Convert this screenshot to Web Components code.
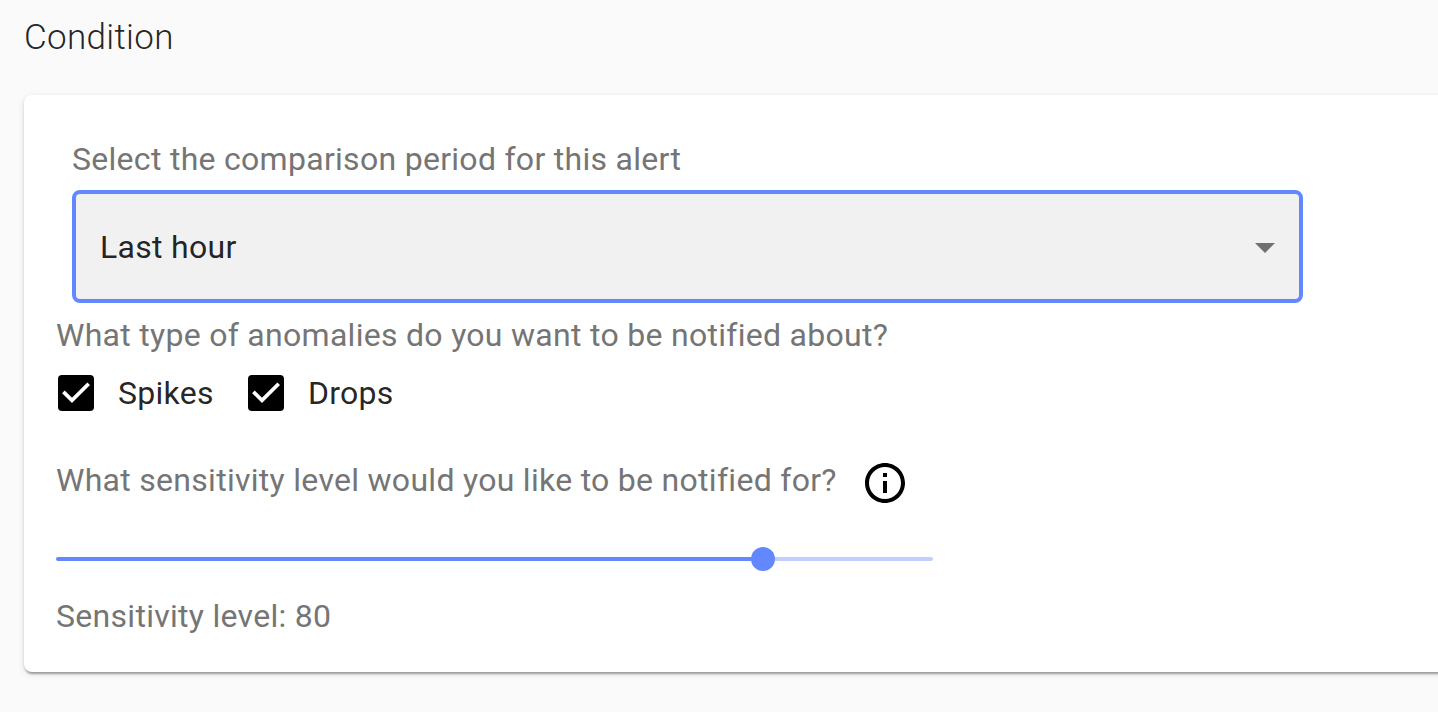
<!DOCTYPE html>
<html lang="en"><head><meta charset="utf-8"><title>Condition</title>
<style>body{margin:0;background:#fafafa;font-family:Roboto,sans-serif;overflow:hidden}</style></head><body>
<alert-page></alert-page>
<script>
const define=(name,html)=>customElements.define(name,class extends HTMLElement{
  constructor(){super();this.attachShadow({mode:'open'}).innerHTML=html;}
});
define('page-title',`<style>:host{display:block;font-size:35px;line-height:48px;font-weight:300;letter-spacing:.32px;color:rgba(0,0,0,.87)}</style><slot></slot>`);
define('field-label',`<style>:host{display:block;font-size:32px;line-height:40px;letter-spacing:.288px;color:#757575;white-space:nowrap}</style><slot></slot>`);
define('select-box',`<style>:host{display:flex;box-sizing:border-box;width:1231px;height:113px;border:4px solid #6387ff;border-radius:8px;background:#f1f1f1;align-items:center;justify-content:space-between;padding:0 24px;font-size:32px;letter-spacing:.288px;color:rgba(0,0,0,.87)}svg{display:block;margin-top:2px}</style><slot></slot><svg width="20" height="10" viewBox="0 0 20 10"><path d="M0 0h20L10 10z" fill="#707070"/></svg>`);
define('check-box',`<style>:host{display:flex;align-items:center;gap:24px;font-size:32px;line-height:40px;letter-spacing:.288px;color:rgba(0,0,0,.87)}svg{display:block}</style><svg width="36" height="36" viewBox="0 0 36 36"><rect width="36" height="36" rx="4"/><path d="M5.400 16.900L14 25.400L30.700 8.700" fill="none" stroke="#fff" stroke-width="3.7"/></svg><slot></slot>`);
define('info-icon',`<style>:host{display:block}svg{display:block}</style><svg width="40" height="40" viewBox="2 2 20 20"><path d="M11 7h2v2h-2zm0 4h2v6h-2zm1-9C6.480 2 2 6.480 2 12s4.480 10 10 10 10-4.480 10-10S17.520 2 12 2zm0 18c-4.410 0-8-3.590-8-8s3.590-8 8-8 8 3.590 8 8-3.590 8-8 8z"/></svg>`);
define('range-slider',`<style>:host{display:flex;align-items:center;width:877px;height:24px}.a{width:695px;height:4px;border-radius:2px 0 0 2px;background:#6387ff}.t{width:24px;height:24px;border-radius:50%;background:#6387ff}.b{flex:1;height:4px;border-radius:0 2px 2px 0;background:#c1cfff}</style><div class="a"></div><div class="t"></div><div class="b"></div>`);
define('paper-card',`<style>:host{display:block;box-sizing:border-box;height:577px;background:#fff;border-radius:8px 0 0 8px;padding:44px 0 0 32px;box-shadow:0 4px 2px -2px rgba(0,0,0,.2),0 2px 2px rgba(0,0,0,.14),0 2px 6px rgba(0,0,0,.12)}</style><slot></slot>`);
define('alert-page',`<style>:host{display:block;box-sizing:border-box;height:712px;padding:14px 0 0 24px;overflow:hidden}
paper-card{margin-top:33px;margin-right:-12px}.period{padding-left:16px}.period select-box{margin-top:11px}.types{margin-top:12px}.checks{display:flex;gap:34px;margin:18px 0 0 2px}.sens{display:flex;align-items:flex-start;gap:28.500px;margin-top:47px}.sens info-icon{margin-top:3px}range-slider{margin-top:44px}.level{margin-top:25px}</style>
<page-title>Condition</page-title><paper-card><div class="period"><field-label>Select the comparison period for this alert</field-label><select-box>Last hour</select-box></div><field-label class="types">What type of anomalies do you want to be notified about?</field-label><div class="checks"><check-box>Spikes</check-box><check-box>Drops</check-box></div><div class="sens"><field-label>What sensitivity level would you like to be notified for?</field-label><info-icon></info-icon></div><range-slider></range-slider><field-label class="level">Sensitivity level: 80</field-label></paper-card>`);
</script></body></html>
